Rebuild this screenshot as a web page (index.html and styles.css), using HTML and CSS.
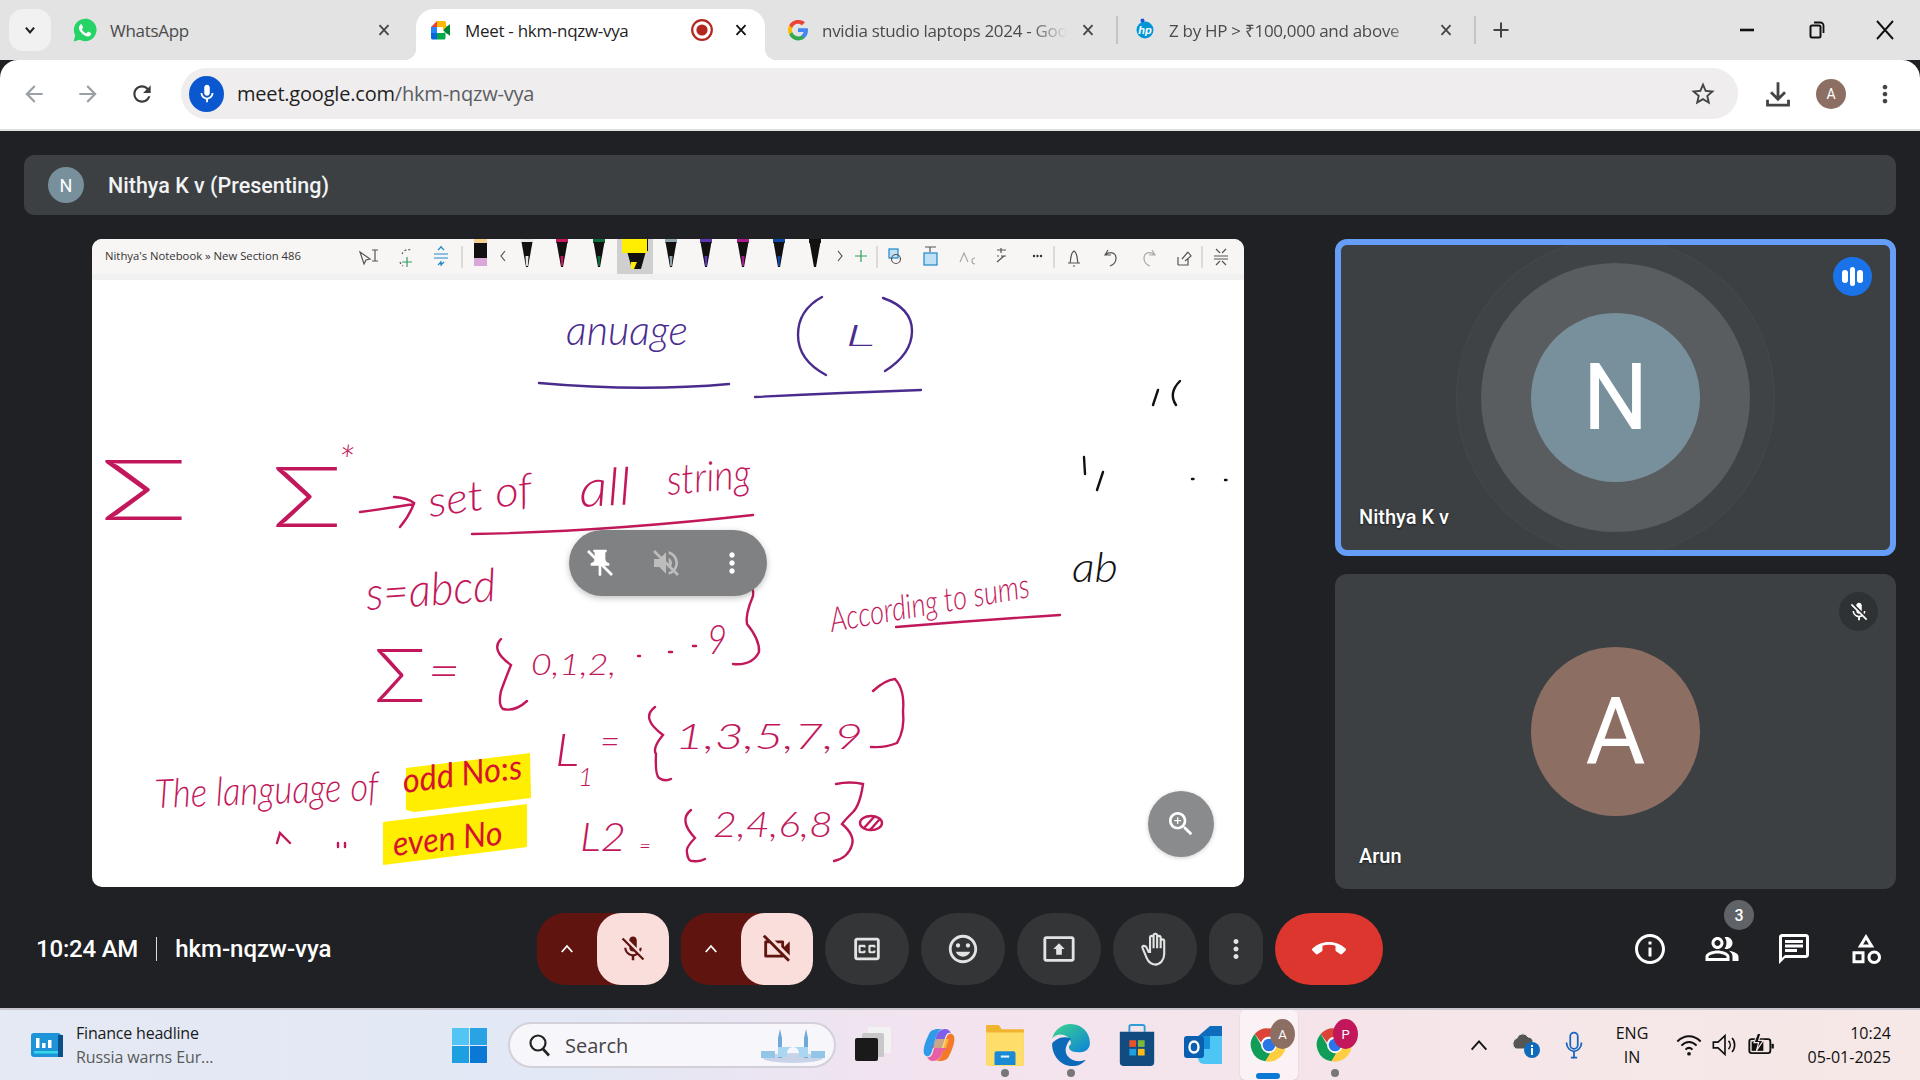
FILE: index.html
```html
<!DOCTYPE html>
<html lang="en">
<head>
<meta charset="utf-8">
<title>Meet - hkm-nqzw-vya</title>
<link rel="stylesheet" href="styles.css">
</head>
<body>
<svg class="defs" width="0" height="0" aria-hidden="true">
  <defs>
    <symbol id="i-mic" viewBox="0 0 24 24"><path d="M12 14c1.66 0 3-1.34 3-3V5c0-1.66-1.34-3-3-3S9 3.34 9 5v6c0 1.66 1.34 3 3 3zm5-3c0 2.76-2.24 5-5 5s-5-2.24-5-5H5c0 3.53 2.61 6.43 6 6.92V21h2v-3.08c3.39-.49 6-3.39 6-6.92h-2z"/></symbol>
    <symbol id="i-micoff" viewBox="0 0 24 24"><path d="M19 11h-1.7c0 .74-.16 1.43-.43 2.05l1.23 1.23c.56-.98.9-2.09.9-3.28zm-4.02.17c0-.06.02-.11.02-.17V5c0-1.66-1.34-3-3-3s-3 1.34-3 3v.18l5.98 5.99zM4.27 3L3 4.27l6.01 6.01V11c0 1.66 1.33 3 2.99 3 .22 0 .44-.03.65-.08l1.66 1.66c-.71.33-1.5.52-2.31.52-2.76 0-5.3-2.1-5.3-5.1H5c0 3.41 2.72 6.23 6 6.72V21h2v-3.28c.91-.13 1.77-.45 2.54-.9L19.73 21 21 19.73 4.27 3z"/></symbol>
    <symbol id="i-close" viewBox="0 0 24 24"><path d="M6 5.5l12 13M18 5.5l-12 13" fill="none" stroke="currentColor" stroke-width="2.4"/></symbol>
    <symbol id="i-chrome" viewBox="0 0 48 48">
      <path fill="#db4437" d="M24 3a21 21 0 0 1 18.2 10.5H24a10.5 10.5 0 0 0-10 7.3L6 10A21 21 0 0 1 24 3z"/>
      <path fill="#0f9d58" d="M6 10l9 15.6a10.5 10.5 0 0 0 11.9 8.9L19.5 44.5A21 21 0 0 1 6 10z"/>
      <path fill="#ffcd40" d="M42.2 13.5A21 21 0 0 1 19.5 44.5l9-15.5a10.5 10.5 0 0 0-4.5-15.5z"/>
      <circle cx="24" cy="24" r="10" fill="#fff"/><circle cx="24" cy="24" r="8" fill="#2a75e8"/>
    </symbol>
    <g id="pen">
      <rect x="-6" y="0" width="12" height="4"/>
      <path d="M-5.5 3h11l-2.5 14 -2 11h-2l-2-11z" fill="#111"/>
      <path d="M-1.5 17h3l-.7 10h-1.6z"/>
    </g>
  </defs>
</svg>

<header class="tabstrip">
  <div class="tab-search"><svg class="ic14" viewBox="0 0 24 24"><path d="M5 8l7 8 7-8" fill="none" stroke="#1f1f1f" stroke-width="3.6"/></svg></div>
  <div class="tab tab-wa">
    <svg class="fav" viewBox="0 0 24 24"><path fill="#25d366" d="M12 1.5A10.4 10.4 0 0 0 3 17l-1.5 5.5 5.7-1.5A10.4 10.4 0 1 0 12 1.5z"/><path fill="#fff" d="M8.6 6.7c-.3 0-.8.1-1.1.6-.5.6-1.1 1.500-1.100 2.900 0 2.900 3.900 7.100 8 7.700 1.800.1 3-.9 3.200-2 .1-.5.1-1-.1-1.100l-2.300-1.200c-.3-.1-.6 0-.7.2l-.9 1.100c-.2.2-.4.2-.7.1-1.600-.7-2.900-1.900-3.700-3.400-.1-.3 0-.5.2-.7l.6-.8c.2-.2.200-.4.100-.7l-1-2.300c-.2-.4-.4-.4-.5-.4z"/></svg>
    <span class="tab-title">WhatsApp</span>
    <svg class="tab-x" viewBox="0 0 24 24"><use href="#i-close"/></svg>
  </div>
  <div class="tab tab-active">
    <svg class="fav" viewBox="0 0 24 24"><path fill="#00832d" d="M14 12l3 3 4 2.800V6.200l-4 2.800z"/><path fill="#0066da" d="M2 15v5c0 .8.700 1.500 1.500 1.500H8V15z"/><path fill="#e94235" d="M8 3L2 9h6z"/><path fill="#2684fc" d="M2 9h6v6H2z"/><path fill="#00ac47" d="M14 15H8v6.500h7c.8 0 1.500-.7 1.500-1.500v-5.800z"/><path fill="#ffba00" d="M15 3H8v6h6v3l3-2.800V4.500C17 3.700 15.800 3 15 3z"/></svg>
    <span class="tab-title tab-title-active">Meet - hkm-nqzw-vya</span>
    <svg class="rec" viewBox="0 0 24 24"><circle cx="12" cy="12" r="9.800" fill="none" stroke="#b3261e" stroke-width="2.200"/><circle cx="12" cy="12" r="5.600" fill="#b3261e"/></svg>
    <svg class="tab-x tab-x-dark" viewBox="0 0 24 24"><use href="#i-close"/></svg>
  </div>
  <div class="tab tab-g">
    <svg class="fav" viewBox="0 0 24 24"><path fill="#4285f4" d="M22 12.200c0-.7-.1-1.400-.2-2H12v3.900h5.600a4.800 4.800 0 0 1-2.100 3.100v2.600h3.400c2-1.800 3.100-4.500 3.100-7.600z"/><path fill="#34a853" d="M12 22.500c2.800 0 5.200-.9 6.900-2.500l-3.400-2.600c-.9.600-2.100 1-3.500 1-2.700 0-5-1.800-5.800-4.300H3.200v2.700a10.500 10.500 0 0 0 8.800 5.700z"/><path fill="#fbbc05" d="M6.200 14.100a6.300 6.300 0 0 1 0-4.200V7.200H3.200a10.500 10.500 0 0 0 0 9.600z"/><path fill="#ea4335" d="M12 5.700c1.500 0 2.900.5 4 1.600l3-3A10.500 10.500 0 0 0 3.200 7.200l3 2.700C7 7.500 9.300 5.700 12 5.700z"/></svg>
    <span class="tab-title tab-fade">nvidia studio laptops 2024 - Google</span>
    <svg class="tab-x" viewBox="0 0 24 24"><use href="#i-close"/></svg>
  </div>
  <i class="tab-sep"></i>
  <div class="tab tab-hp">
    <svg class="fav" viewBox="0 0 24 24"><circle cx="12" cy="12" r="8.500" fill="#0096d6"/><circle cx="9.500" cy="2.500" r="2" fill="#1a56db"/><text x="12" y="15.500" class="hp-text">hp</text></svg>
    <span class="tab-title tab-fade-hp">Z by HP &gt; ₹100,000 and above</span>
    <svg class="tab-x" viewBox="0 0 24 24"><use href="#i-close"/></svg>
  </div>
  <i class="tab-sep tab-sep2"></i>
  <svg class="newtab" viewBox="0 0 24 24"><path d="M12 3v18M3 12h18" stroke="#444" stroke-width="2.400"/></svg>
  <div class="winctl">
    <svg class="wc" viewBox="0 0 24 24"><path d="M5 12h14" stroke="#111" stroke-width="2.600"/></svg>
    <svg class="wc" viewBox="0 0 24 24"><rect x="6.500" y="7.500" width="10" height="12" rx="1.500" fill="none" stroke="#111" stroke-width="2"/><path d="M10 4.500h6.500c1.500 0 3 1.500 3 3V15" fill="none" stroke="#111" stroke-width="1.800"/></svg>
    <svg class="wc" viewBox="0 0 24 24"><path d="M4 3l16 18M20 3L4 21" stroke="#111" stroke-width="1.900"/></svg>
  </div>
</header>

<nav class="toolbar">
  <svg class="nav-ic nav-back" viewBox="0 0 24 24"><path d="M20 11H7.830l5.590-5.590L12 4l-8 8 8 8 1.410-1.410L7.830 13H20v-2z"/></svg>
  <svg class="nav-ic nav-fwd" viewBox="0 0 24 24"><path d="M4 11h12.170l-5.590-5.590L12 4l8 8-8 8-1.410-1.410L16.170 13H4v-2z"/></svg>
  <svg class="nav-ic nav-reload" viewBox="0 0 24 24"><path d="M17.650 6.350C16.200 4.900 14.210 4 12 4c-4.420 0-7.990 3.580-7.990 8s3.570 8 7.990 8c3.730 0 6.840-2.550 7.730-6h-2.080c-.82 2.330-3.040 4-5.650 4-3.310 0-6-2.690-6-6s2.690-6 6-6c1.660 0 3.140.69 4.220 1.780L13 11h7V4l-2.350 2.350z"/></svg>
  <div class="omnibox">
    <span class="omni-mic"><svg class="ic22 white" viewBox="0 0 24 24"><use href="#i-mic"/></svg></span>
    <span class="url"><b>meet.google.com</b>/hkm-nqzw-vya</span>
    <svg class="star" viewBox="0 0 24 24"><path d="M22 9.240l-7.190-.62L12 2 9.190 8.630 2 9.240l5.460 4.730L5.820 21 12 17.270 18.180 21l-1.630-7.030L22 9.240zM12 15.400l-3.760 2.270 1-4.280-3.320-2.880 4.380-.38L12 6.100l1.710 4.040 4.380.38-3.320 2.880 1 4.280L12 15.400z"/></svg>
  </div>
  <svg class="download" viewBox="0 0 24 24"><path d="M12 2v14M6 10.500l6 6 6-6" fill="none" stroke="#444" stroke-width="2.400"/><path d="M3 17v4.500h18V17" fill="none" stroke="#444" stroke-width="2.400"/></svg>
  <span class="profile">A</span>
  <svg class="kebab" viewBox="0 0 24 24"><path d="M12 8c1.100 0 2-.9 2-2s-.9-2-2-2-2 .9-2 2 .9 2 2 2zm0 2c-1.100 0-2 .9-2 2s.9 2 2 2 2-.9 2-2-.9-2-2-2zm0 6c-1.100 0-2 .9-2 2s.9 2 2 2 2-.9 2-2-.9-2-2-2z"/></svg>
</nav>

<main class="meet">
  <section class="presenter-bar">
    <span class="presenter-avatar">N</span>
    <span class="presenter-name">Nithya K v (Presenting)</span>
  </section>

  <div class="stage-row">
    <div class="stage">
      <div class="slide">
        <svg class="board" viewBox="92 239 1152 648">
          <!-- OneNote ribbon -->
          <rect x="92" y="239" width="1152" height="35" class="rib"/>
          <rect x="92" y="274" width="1152" height="6" class="rib-shadow"/>
          <text x="105" y="260" class="rib-text" textLength="196" lengthAdjust="spacingAndGlyphs">Nithya's Notebook » New Section 486</text>
          <g class="rib-ic">
            <path d="M360 252l4 12 2-4 4-1z M372 250h6M375 250v11M372 261h6"/>
            <path d="M402 254a7 7 0 0 1 9-4M400 262a7 7 0 0 0 3 4" stroke-dasharray="2 2"/>
            <path d="M441 248v-2M441 247l-3 3M441 247l3 3M434 254h14M434 258h14M441 262l-3 3M441 265l3-3M441 261v5" class="rib-blue"/>
            <path d="M402 262h10M407 257v10" class="rib-green"/>
            <path d="M462 246v22M877 246v22M1054 246v22M1202 246v22" class="rib-sep"/>
            <path d="M505 251l-4 5 4 5M838 251l4 5-4 5"/>
            <path d="M855 256h12M861 250v12" class="rib-green"/>
            <rect x="889" y="249" width="9" height="9" class="rib-blue-s"/><circle cx="896" cy="259" r="4.500"/>
            <path d="M925 247h11M930 247v5"/><rect x="924" y="253" width="13" height="12" class="rib-blue-s"/>
            <path d="M960 262l4-9 4 9M975 264a3 3 0 1 1 0-6" class="rib-faint"/>
            <path d="M997 250h9M1001 248v5M997 262l7-6M1001 256h5M997 256h2"/>
            <path d="M1070 263c1-2 0-10 4-12 4 2 3 10 4 12zM1068 263h12M1073 266h2"/>
            <path d="M1108 250l-3 5 6 0M1105 255c7-5 11-1 11 3s-3 7-6 8"/>
            <path d="M1152 250l3 5-6 0M1155 255c-7-5-11-1-11 3s3 7 6 8" class="rib-faint"/>
            <path d="M1178 265h10v-6M1178 265v-8M1182 259l6-7M1188 252l3 4-6 5"/>
            <path d="M1216 249l4 4M1226 249l-4 4M1216 265l4-4M1226 265l-4-4M1214 256h14M1214 259h14"/>
          </g>
          <circle cx="1034" cy="256" r="1.200" class="rib-dot"/><circle cx="1037.500" cy="256" r="1.200" class="rib-dot"/><circle cx="1041" cy="256" r="1.200" class="rib-dot"/>
          <rect x="617" y="239" width="36" height="35" class="pen-bg"/>
          <rect x="474" y="239" width="13" height="4" class="pen-peach"/>
          <rect x="474" y="243" width="13" height="15" fill="#111"/>
          <rect x="474" y="258" width="13" height="8" class="pen-lilac"/>
          <use href="#pen" transform="translate(527 239)" class="pen-white"/>
          <use href="#pen" transform="translate(562 239)" class="pen-red"/>
          <use href="#pen" transform="translate(599 239)" class="pen-green"/>
          <path d="M624 239h24v12h-2l-5 18h-9l-5-18h-3z" fill="#111"/>
          <rect x="622" y="239" width="25" height="14" class="pen-yellow"/>
          <path d="M631 262h6l-3 7h-3z" class="pen-yellow"/>
          <use href="#pen" transform="translate(671 239)" class="pen-grey"/>
          <use href="#pen" transform="translate(706 239)" class="pen-purple"/>
          <use href="#pen" transform="translate(743 239)" class="pen-mag"/>
          <use href="#pen" transform="translate(779 239)" class="pen-navy"/>
          <use href="#pen" transform="translate(815 239)" class="pen-black"/>

          <!-- ink: purple -->
          <g class="stroke-p">
            <path d="M539 383Q640 392 729 384"/>
            <path d="M755 397Q840 393 921 390"/>
            <path d="M822 297Q798 310 798 335T826 375"/>
            <path d="M883 298Q912 308 912 331T885 371"/>
          </g>
          <text x="566" y="345" class="ink ink-p" textLength="122" lengthAdjust="spacingAndGlyphs">anuage</text>
          <text x="845" y="346" class="ink ink-p ink-30" textLength="30" lengthAdjust="spacingAndGlyphs">L</text>

          <!-- ink: black -->
          <g class="stroke-k">
            <path d="M1153 405L1158 390M1180 381Q1168 393 1176 405"/>
            <path d="M1084 457L1085 474M1103 472L1097 490"/>
            <path d="M1192 479h1.500M1225 480h1.500"/>
          </g>
          <text x="1072" y="582" class="ink ink-k ink-42" textLength="46" lengthAdjust="spacingAndGlyphs">ab</text>

          <!-- ink: pink -->
          <text x="100" y="520" class="ink ink-r ink-sig" textLength="88" lengthAdjust="spacingAndGlyphs">Σ</text>
          <text x="272" y="527" class="ink ink-r ink-sig" textLength="70" lengthAdjust="spacingAndGlyphs">Σ</text>
          <text x="338" y="476" class="ink ink-r ink-42">*</text>
          <text x="430" y="517" class="ink ink-r ink-42" textLength="105" lengthAdjust="spacingAndGlyphs" transform="rotate(-8 430 517)">set of</text>
          <text x="580" y="507" class="ink ink-r ink-52" textLength="52" lengthAdjust="spacingAndGlyphs" transform="rotate(-3 580 507)">all</text>
          <text x="668" y="495" class="ink ink-r ink-42" textLength="84" lengthAdjust="spacingAndGlyphs" transform="rotate(-5 668 495)">string</text>
          <text x="367" y="610" class="ink ink-r ink-46" textLength="130" lengthAdjust="spacingAndGlyphs" transform="rotate(-4 367 610)">s=abcd</text>
          <text x="374" y="702" class="ink ink-r ink-sig2" textLength="52" lengthAdjust="spacingAndGlyphs">Σ</text>
          <text x="428" y="688" class="ink ink-r ink-52" textLength="32" lengthAdjust="spacingAndGlyphs">=</text>
          <text x="531" y="675" class="ink ink-r ink-30" textLength="85" lengthAdjust="spacingAndGlyphs">0,1,2,</text>
          <text x="707" y="654" class="ink ink-r ink-42" textLength="20" lengthAdjust="spacingAndGlyphs">9</text>
          <text x="832" y="632" class="ink ink-r ink-34" textLength="202" lengthAdjust="spacingAndGlyphs" transform="rotate(-10 832 632)">According to sums</text>
          <text x="555" y="766" class="ink ink-r ink-46" textLength="24" lengthAdjust="spacingAndGlyphs">L</text>
          <text x="578" y="786" class="ink ink-r ink-26">1</text>
          <text x="600" y="754" class="ink ink-r ink-36" textLength="20" lengthAdjust="spacingAndGlyphs">=</text>
          <text x="675" y="749" class="ink ink-r ink-36" textLength="188" lengthAdjust="spacingAndGlyphs">1,3,5,7,9</text>
          <text x="580" y="851" class="ink ink-r ink-40" textLength="46" lengthAdjust="spacingAndGlyphs">L2</text>
          <text x="639" y="853" class="ink ink-r ink-22" textLength="12" lengthAdjust="spacingAndGlyphs">=</text>
          <text x="713" y="837" class="ink ink-r ink-36" textLength="120" lengthAdjust="spacingAndGlyphs">2,4,6,8</text>
          <text x="155" y="808" class="ink ink-r ink-40" textLength="224" lengthAdjust="spacingAndGlyphs" transform="rotate(-2 155 808)">The language of</text>
          <g class="stroke-r">
            <path d="M360 512Q390 508 414 504M394 497Q408 498 414 503Q410 515 400 527"/>
            <path d="M472 534Q600 532 753 515"/>
            <path d="M501 639Q490 650 511 665Q505 680 501 691Q498 705 503 709Q515 712 527 701"/>
            <path d="M638 656h2M669 652h3M693 646h3"/>
            <path d="M739 592Q755 582 753 596Q745 615 747 624Q760 640 759 652Q752 666 733 664"/>
            <path d="M896 627Q980 620 1060 615"/>
            <path d="M655 707Q640 718 663 735Q652 748 656 754Q655 775 659 778Q665 782 671 779"/>
            <path d="M873 691Q885 680 895 679Q905 690 903 711Q905 730 897 743Q885 748 871 747"/>
            <path d="M691 810Q678 820 695 838Q685 848 687 853Q688 862 693 861Q700 862 705 859"/>
            <path d="M836 784Q850 781 863 784Q860 805 853 812Q845 820 842 824Q855 835 852 845Q848 858 834 861"/>
            <ellipse cx="871" cy="823" rx="11" ry="7"/>
            <path d="M864 828l10-11M870 830l9-10"/>
            <path d="M277 843L280 833L290 843M338 843v4M345 843v4"/>
          </g>
          <path d="M406 768L530 753L531 798L414 812L406 810Z" class="hl"/>
          <path d="M383 822L527 804L527 847L383 865Z" class="hl"/>
          <text x="404" y="793" class="ink ink-h ink-34" textLength="120" lengthAdjust="spacingAndGlyphs" transform="rotate(-7 404 793)">odd No:s</text>
          <text x="394" y="856" class="ink ink-h ink-34" textLength="110" lengthAdjust="spacingAndGlyphs" transform="rotate(-6 394 856)">even No</text>
        </svg>
        <div class="float-pill">
          <svg class="pill-ic" viewBox="0 0 24 24"><path d="M16 9V4h1V2H7v2h1v5c0 1.660-1.340 3-3 3v2h5.970v7l1 1 1-1v-7H19v-2c-1.660 0-3-1.340-3-3z" fill="#fff"/><path d="M3 3l18 18" stroke="#fff" stroke-width="2"/></svg>
          <svg class="pill-ic" viewBox="0 0 24 24"><path d="M3 9v6h4l5 5V4L7 9H3zM16.500 12c0-1.770-1.020-3.290-2.500-4.030v8.050c1.480-.73 2.500-2.250 2.500-4.020zM14 3.230v2.060c2.890.86 5 3.540 5 6.710s-2.110 5.850-5 6.710v2.060c4.010-.91 7-4.490 7-8.770s-2.990-7.860-7-8.770z" fill="#bdbdbd"/><path d="M3 3l18 18" stroke="#bdbdbd" stroke-width="2"/></svg>
          <svg class="pill-ic" viewBox="0 0 24 24"><path fill="#fff" d="M12 8c1.100 0 2-.9 2-2s-.9-2-2-2-2 .9-2 2 .9 2 2 2zm0 2c-1.100 0-2 .9-2 2s.9 2 2 2 2-.9 2-2-.9-2-2-2zm0 6c-1.100 0-2 .9-2 2s.9 2 2 2 2-.9 2-2-.9-2-2-2z"/></svg>
        </div>
        <div class="float-zoom"><svg class="zoom-ic" viewBox="0 0 24 24"><path fill="#fff" d="M15.500 14h-.79l-.28-.27C15.410 12.590 16 11.110 16 9.500 16 5.910 13.090 3 9.500 3S3 5.910 3 9.500 5.910 16 9.500 16c1.610 0 3.090-.59 4.230-1.570l.27.28v.79l5 4.990L20.490 19l-4.990-5zm-6 0C7.010 14 5 11.990 5 9.500S7.010 5 9.500 5 14 7.010 14 9.500 11.990 14 9.500 14zM12 10h-2v2H9v-2H7V9h2V7h1v2h2v1z"/></svg></div>
      </div>
    </div>

    <aside class="tiles">
      <article class="tile tile-active">
        <span class="avatar avatar-n">N</span>
        <span class="chip chip-blue"><i class="eq eq-s"></i><i class="eq eq-l"></i><i class="eq eq-s"></i></span>
        <span class="tile-name">Nithya K v</span>
      </article>
      <article class="tile tile-second">
        <span class="avatar avatar-a">A</span>
        <span class="chip chip-dark"><svg class="ic22 white" viewBox="0 0 24 24"><use href="#i-micoff"/></svg></span>
        <span class="tile-name">Arun</span>
      </article>
    </aside>
  </div>

  <footer class="callbar">
    <div class="call-info">
      <span class="call-time">10:24 AM</span>
      <i class="call-sep"></i>
      <span class="call-code">hkm-nqzw-vya</span>
    </div>
    <div class="controls">
      <div class="split">
        <span class="split-caret"><svg class="caret" viewBox="0 0 24 24"><path d="M5 16l7-8 7 8" fill="none" stroke="#fff" stroke-width="2.400"/></svg></span>
        <span class="split-main"><svg class="ic30 darkred" viewBox="0 0 24 24"><use href="#i-micoff"/></svg></span>
      </div>
      <div class="split">
        <span class="split-caret"><svg class="caret" viewBox="0 0 24 24"><path d="M5 16l7-8 7 8" fill="none" stroke="#fff" stroke-width="2.400"/></svg></span>
        <span class="split-main"><svg class="ic34 darkred" viewBox="0 0 24 24"><path d="M9.560 8l-2-2-4.150-4.140L2 3.270 4.730 6H4c-.55 0-1 .45-1 1v10c0 .55.45 1 1 1h12c.21 0 .39-.08.55-.18L19.730 21l1.410-1.410-8.860-8.860L9.560 8zM5 16V8h1.730l8 8H5zm10-8v2.610l6 6V6.500l-4 4V7c0-.55-.45-1-1-1h-5.610l2 2H15z"/></svg></span>
      </div>
      <button class="ctl ctl-84"><svg class="ic34 light" viewBox="0 0 24 24"><path d="M19 4H5c-1.110 0-2 .9-2 2v12c0 1.100.89 2 2 2h14c1.100 0 2-.9 2-2V6c0-1.100-.9-2-2-2zm0 14H5V6h14v12zM7 15h3c.55 0 1-.45 1-1v-1H9.500v.5h-2v-3h2v.5H11v-1c0-.55-.45-1-1-1H7c-.55 0-1 .45-1 1v4c0 .55.45 1 1 1zm7 0h3c.55 0 1-.45 1-1v-1h-1.500v.5h-2v-3h2v.5H18v-1c0-.55-.45-1-1-1h-3c-.55 0-1 .45-1 1v4c0 .55.45 1 1 1z"/></svg></button>
      <button class="ctl ctl-84"><svg class="ic34 light" viewBox="0 0 24 24"><path d="M11.990 2C6.470 2 2 6.480 2 12s4.470 10 9.990 10C17.520 22 22 17.520 22 12S17.520 2 11.990 2zM12 20c-4.420 0-8-3.580-8-8s3.580-8 8-8 8 3.580 8 8-3.580 8-8 8zm3.500-9c.83 0 1.500-.67 1.500-1.500S16.330 8 15.500 8 14 8.670 14 9.500s.67 1.500 1.500 1.500zm-7 0c.83 0 1.500-.67 1.500-1.500S9.330 8 8.500 8 7 8.670 7 9.500 7.670 11 8.500 11zm3.500 6.500c2.330 0 4.310-1.460 5.110-3.500H6.890c.8 2.040 2.780 3.500 5.110 3.500z"/></svg></button>
      <button class="ctl ctl-84"><svg class="ic34 light" viewBox="0 0 24 24"><path d="M21 3H3c-1.110 0-2 .89-2 2v14c0 1.110.89 2 2 2h18c1.110 0 2-.89 2-2V5c0-1.110-.89-2-2-2zm0 16.020H3V4.980h18v14.040zM10 12H8l4-4 4 4h-2v4h-4v-4z"/></svg></button>
      <button class="ctl ctl-84"><svg class="ic34 hand" viewBox="0 0 24 24"><path d="M13 23c-3.260 0-5.700-1.800-6.900-4.800l-3-7.100c-.3-.8.4-1.500 1.200-1.300l.6.200c.6.1 1 .5 1.200 1L7.500 14H8.500V4c0-.8.6-1.300 1.200-1.300s1.300.5 1.300 1.300v7.500V2.500c0-.8.600-1.300 1.200-1.300s1.300.5 1.300 1.300v9V4c0-.8.600-1.300 1.200-1.300s1.300.5 1.300 1.300v7.500V6.500c0-.8.6-1.300 1.200-1.300s1.300.5 1.300 1.300V15.500c0 4.200-2.800 7.500-6.500 7.500z"/></svg></button>
      <button class="ctl ctl-54"><svg class="ic30 light" viewBox="0 0 24 24"><path d="M12 8c1.100 0 2-.9 2-2s-.9-2-2-2-2 .9-2 2 .9 2 2 2zm0 2c-1.100 0-2 .9-2 2s.9 2 2 2 2-.9 2-2-.9-2-2-2zm0 6c-1.100 0-2 .9-2 2s.9 2 2 2 2-.9 2-2-.9-2-2-2z"/></svg></button>
      <button class="ctl ctl-end"><svg class="ic34 white" viewBox="0 0 24 24"><path d="M12 9c-1.600 0-3.150.25-4.600.72v3.100c0 .39-.23.74-.56.9-.98.49-1.870 1.120-2.660 1.850-.18.18-.43.28-.7.28-.28 0-.53-.11-.71-.29L.29 13.080c-.18-.17-.29-.42-.29-.7 0-.28.11-.53.29-.71C3.340 8.780 7.460 7 12 7s8.660 1.780 11.710 4.670c.18.18.29.43.29.71 0 .28-.11.53-.29.71l-2.480 2.480c-.18.18-.43.29-.71.29-.27 0-.52-.11-.7-.28-.79-.74-1.690-1.360-2.670-1.850-.33-.16-.56-.5-.56-.9v-3.100C15.150 9.250 13.600 9 12 9z"/></svg></button>
    </div>
    <div class="side-actions">
      <span class="side"><svg class="ic36 white" viewBox="0 0 24 24"><path d="M11 7h2v2h-2zm0 4h2v6h-2zm1-9C6.480 2 2 6.480 2 12s4.480 10 10 10 10-4.480 10-10S17.520 2 12 2zm0 18c-4.410 0-8-3.590-8-8s3.590-8 8-8 8 3.590 8 8-3.590 8-8 8z"/></svg></span>
      <span class="side"><svg class="ic36 white" viewBox="0 0 24 24"><path d="M16.670 13.130C18.040 14.060 19 15.320 19 17v3h4v-3c0-2.180-3.570-3.470-6.330-3.870zM15 12c2.210 0 4-1.790 4-4s-1.790-4-4-4c-.47 0-.91.1-1.330.24C14.500 5.270 15 6.580 15 8s-.5 2.730-1.330 3.760c.42.14.86.24 1.330.24zM9 12c2.210 0 4-1.790 4-4s-1.790-4-4-4-4 1.790-4 4 1.790 4 4 4zm0-6c1.100 0 2 .9 2 2s-.9 2-2 2-2-.9-2-2 .9-2 2-2zM9 13c-2.670 0-8 1.340-8 4v3h16v-3c0-2.660-5.330-4-8-4zm6 5H3v-.99C3.200 16.290 6.300 15 9 15s5.800 1.290 6 2v1z"/></svg><b class="badge">3</b></span>
      <span class="side"><svg class="ic36 white" viewBox="0 0 24 24"><path d="M20 2H4c-1.100 0-2 .9-2 2v18l4-4h14c1.100 0 2-.9 2-2V4c0-1.100-.9-2-2-2zm0 14H6l-2 2V4h16v12zM6 12h8v2H6zm0-3h12v2H6zm0-3h12v2H6z"/></svg></span>
      <span class="side"><svg class="ic36 white" viewBox="0 0 24 24"><path d="M12 2l-5.500 9h11L12 2zm0 3.840L13.930 9h-3.870L12 5.840zM17.500 13c-2.490 0-4.500 2.010-4.500 4.500s2.010 4.500 4.500 4.500 4.500-2.010 4.500-4.500-2.010-4.500-4.500-4.500zm0 7c-1.380 0-2.500-1.120-2.500-2.500s1.120-2.500 2.500-2.500 2.500 1.120 2.500 2.500-1.120 2.500-2.500 2.500zM3 21.500h8v-8H3v8zm2-6h4v4H5v-4z"/></svg></span>
    </div>
  </footer>
</main>

<footer class="taskbar">
  <div class="widget">
    <svg class="widget-ic" viewBox="0 0 32 24"><rect x="0" y="0" width="30" height="24" rx="3" fill="#1d93d8"/><rect x="27" y="2" width="5" height="22" fill="#0b4f8a"/><rect x="5" y="5" width="3.500" height="10" fill="#fff"/><rect x="11" y="10" width="3.500" height="5" fill="#fff"/><rect x="17" y="7" width="3.500" height="8" fill="#fff"/><rect x="3" y="18" width="24" height="2.500" fill="#33d9e8"/></svg>
    <div class="widget-text">
      <span class="w-title">Finance headline</span>
      <span class="w-sub">Russia warns Eur...</span>
    </div>
  </div>
  <div class="tb-slot tb-win">
    <svg class="win" viewBox="0 0 35 35"><rect width="17" height="17" fill="#52c5f5"/><rect x="18" width="17" height="17" fill="#2aa3e4"/><rect y="18" width="17" height="17" fill="#1e9fe0"/><rect x="18" y="18" width="17" height="17" fill="#0a78d4"/></svg>
  </div>
  <div class="search">
    <svg class="search-ic" viewBox="0 0 24 24"><circle cx="11" cy="10" r="7.500" fill="none" stroke="#222" stroke-width="2.200"/><path d="M16 16l6 6.500" stroke="#222" stroke-width="2.600"/></svg>
    <span class="search-text">Search</span>
    <svg class="mosque" viewBox="0 0 70 36"><ellipse cx="35" cy="31" rx="30" ry="5" fill="#c9d3e8"/><path d="M22 2l2 9v20h-4V11zM48 2l2 9v20h-4V11z" fill="#6fa9d8"/><path d="M20 30V20h30v10h-9v-4a6 6 0 0 0-12 0v4z" fill="#a9d6f0"/><path d="M3 24h14v7H3zM53 24h14v7H53z" fill="#93c5e6"/></svg>
  </div>
  <div class="tb-slot">
    <svg class="ic36" viewBox="0 0 36 36"><rect x="13" y="0" width="23" height="26" rx="1.500" fill="#f2f2f2"/><rect x="7" y="6" width="22" height="24" rx="1.500" fill="#c8c8c8"/><rect x="0" y="11" width="23" height="23" rx="2" fill="#1a1a1a"/><rect x="0" y="11" width="23" height="0" fill="#1a1a1a"/></svg>
  </div>
  <div class="tb-slot">
    <svg class="ic36" viewBox="0 0 36 36"><path d="M8 7c2-5 8-5 10-5h3c-3 1-5 4-6 8l-4 14c-1 4-3 6-6 5C1 27 2 19 8 7z" fill="#2f9be8"/><path d="M28 29c-2 5-8 5-10 5h-3c3-1 5-4 6-8l4-14c1-4 3-6 6-5 4 2 3 10-3 22z" fill="#f5792a"/><path d="M15 10c1-5 5-8 9-8 3 0 5 2 6 4-3-1-5 1-6 5l-3 10H8c3 0 6-3 7-11z" fill="#7d5fe8"/><path d="M21 26c-1 5-5 8-9 8-3 0-5-2-6-4 3 1 5-1 6-5l1-4h15c-3 0-6 2-7 5z" fill="#e85fa4"/><path d="M12 21h13l3-9h-13z" fill="#ffd54a" opacity=".6"/></svg>
  </div>
  <div class="tb-slot tb-dot">
    <svg class="ic38" viewBox="0 0 36 40"><path d="M0 1h12l3 4h21v34H0z" fill="#f2b32e"/><path d="M0 8h36v31a1 1 0 0 1-1 1H1a1 1 0 0 1-1-1z" fill="#ffdd6b"/><path d="M10 26h16a2 2 0 0 1 2 2v11H8V28a2 2 0 0 1 2-2z" fill="#1a8ad4"/><rect x="14" y="30" width="8" height="2" fill="#e3f3ff"/></svg>
  </div>
  <div class="tb-slot tb-dot">
    <svg class="ic38" viewBox="0 0 36 40"><defs><linearGradient id="eg" x1="0" y1="0" x2="1" y2="1"><stop offset="0" stop-color="#3ed68c"/><stop offset="1" stop-color="#0a82d8"/></linearGradient></defs><path d="M18 0C28 0 36 8 36 18c0 7-6 9-11 9-7 0-9-3-9-5 0-1 1-2 2-3 0-6-6-9-10-9-3 0-6 1-8 4C2 6 9 0 18 0z" fill="url(#eg)"/><path d="M0 19C0 30 8 40 19 40c6 0 10-2 13-6-3 1-6 2-10 1-8-2-11-9-8-15 1-3 3-5 4-6-4-2-10-2-14 1-3 2-4 3-4 4z" fill="#0c6ab8"/></svg>
  </div>
  <div class="tb-slot">
    <svg class="ic38" viewBox="0 0 36 44"><path d="M10 8V3a2 2 0 0 1 2-2h12a2 2 0 0 1 2 2v5" fill="none" stroke="#2e9ed8" stroke-width="2"/><path d="M0 8h36v32a4 4 0 0 1-4 4H4a4 4 0 0 1-4-4z" fill="#124b80"/><rect x="10" y="17" width="7" height="7" fill="#e8532b"/><rect x="19" y="17" width="7" height="7" fill="#7cb83c"/><rect x="10" y="26" width="7" height="7" fill="#1ca0e4"/><rect x="19" y="26" width="7" height="7" fill="#fcbc18"/></svg>
  </div>
  <div class="tb-slot">
    <svg class="ic38" viewBox="0 0 38 38"><path d="M12 12L26 0h12v12L24 26z" fill="#0f6cbd"/><path d="M14 10h24v28H20a6 6 0 0 1-6-6z" fill="#4ec6f5"/><path d="M14 10h12v13H14z" fill="#1491d8"/><rect x="0" y="10" width="20" height="22" rx="3" fill="#0b5fb0"/><ellipse cx="10" cy="21" rx="4.500" ry="5.500" fill="none" stroke="#fff" stroke-width="2.400"/></svg>
  </div>
  <div class="tb-slot tb-chrome">
    <svg class="ic38" viewBox="0 0 48 48"><use href="#i-chrome"/></svg>
    <b class="corner corner-a">A</b>
    <i class="running"></i>
  </div>
  <div class="tb-slot tb-dot">
    <svg class="ic38" viewBox="0 0 48 48"><use href="#i-chrome"/></svg>
    <b class="corner corner-p">P</b>
  </div>
  <div class="tray">
    <span class="tray-s tray-48"><svg class="ic22" viewBox="0 0 24 24"><path d="M4 17l8-9 8 9" fill="none" stroke="#111" stroke-width="2"/></svg></span>
    <span class="tray-s tray-47"><svg class="ic30" viewBox="0 0 30 30"><path d="M4 19a6 6 0 0 1 1-11 6 6 0 0 1 11-1 5 5 0 0 1 5 6v6z" fill="#555" stroke="#eee" stroke-width="1"/><circle cx="20" cy="20" r="8" fill="#0f6cbd"/><rect x="19" y="18" width="2" height="7" fill="#fff"/><rect x="19" y="15" width="2" height="2" fill="#fff"/></svg></span>
    <span class="tray-s tray-48"><svg class="ic30" viewBox="0 0 24 24"><rect x="9" y="2" width="6" height="13" rx="3" fill="none" stroke="#1565c0" stroke-width="1.400"/><path d="M6 10c0 4 3 7 6 7s6-3 6-7M12 17v5M9.500 22h5" fill="none" stroke="#1565c0" stroke-width="1.400"/></svg></span>
    <span class="tray-lang"><span>ENG</span><span>IN</span></span>
    <span class="tray-s tray-36 tray-first"><svg class="ic26" viewBox="0 0 24 24"><path d="M2 9c6-6 14-6 20 0M5.500 12.500c4-4 9-4 13 0M9 16c2-2 4-2 6 0" fill="none" stroke="#111" stroke-width="1.700"/><circle cx="12" cy="19.500" r="1.600" fill="#111"/></svg></span>
    <span class="tray-s tray-36"><svg class="ic26" viewBox="0 0 24 24"><path d="M2 9.500h4l6-5.500v16l-6-5.500H2z" fill="none" stroke="#111" stroke-width="1.400"/><path d="M15 8.500c2 2 2 5 0 7M18 6c3 3 3 9 0 12" fill="none" stroke="#111" stroke-width="1.400"/></svg></span>
    <span class="tray-s tray-36"><svg class="ic26" viewBox="0 0 24 24"><rect x="2" y="7" width="18" height="12" rx="2" fill="none" stroke="#111" stroke-width="1.600"/><rect x="4" y="9" width="10" height="8" fill="#111"/><rect x="21" y="11" width="2" height="4" fill="#111"/><path d="M9 2l-3 8h4l-2 7 6-9h-4l2-6z" fill="#111" stroke="#f5e6ea" stroke-width="1"/></svg></span>
    <span class="clock"><span>10:24</span><span>05-01-2025</span></span>
  </div>
</footer>
</body>
</html>
```

FILE: styles.css
```css
* { box-sizing: border-box; }
html, body { margin: 0; padding: 0; }
body {
  width: 1920px; height: 1080px; overflow: hidden;
  display: flex; flex-direction: column;
  font-family: "Open Sans", "Liberation Sans", sans-serif;
  background: #202124;
}
.defs { position: absolute; }
svg { display: block; flex: none; }
.white { fill: #fff; }
.light { fill: #e3e3e3; }
.darkred { fill: #601410; }
.hand { fill: none; stroke: #e3e3e3; stroke-width: 1.5; }
.ic14 { width: 14px; height: 14px; }
.ic22 { width: 22px; height: 22px; }
.ic26 { width: 28px; height: 28px; }
.ic30 { width: 30px; height: 30px; }
.ic34 { width: 34px; height: 34px; }
.ic36 { width: 36px; height: 36px; }
.ic38 { width: 38px; height: 42px; }

/* tab strip */
.tabstrip { height: 60px; background: #e3e3e3; display: flex; align-items: flex-start; padding: 9px 0 0 9px; flex: none; }
.tab-search { width: 42px; height: 42px; border-radius: 14px; background: #f1f1f1; display: flex; align-items: center; justify-content: center; }
.tab { height: 42px; display: flex; align-items: center; position: relative; color: #4b4b4b; }
.fav { width: 24px; height: 24px; }
.tab-title { font-size: 17px; letter-spacing: -.3px; white-space: nowrap; overflow: hidden; }
.tab-x { width: 18px; height: 18px; color: #444; margin-left: auto; }
.tab-x-dark { color: #111; margin-left: 0; }
.tab-wa { width: 365px; padding-left: 21px; padding-right: 23px; gap: 12px; }
.tab-wa .fav { width: 26px; height: 30px; }
.tab-active { width: 349px; height: 51px; background: #fff; border-radius: 18px 18px 0 0; padding: 0 15px 9px 13px; gap: 12px; color: #1f1f1f; margin-top: 0; }
.tab-active::before, .tab-active::after { content: ""; position: absolute; bottom: 0; width: 12px; height: 12px; }
.tab-active::before { left: -12px; background: radial-gradient(circle at 0 0, #e3e3e3 12px, #fff 12.5px); }
.tab-active::after { right: -12px; background: radial-gradient(circle at 100% 0, #e3e3e3 12px, #fff 12.5px); }
.tab-title-active { flex: 1; }
.rec { width: 24px; height: 24px; margin-right: 6px; }
.tab-g { width: 362px - 0; width: 352px; padding-left: 21px; padding-right: 20px; gap: 12px; }
.tab-fade { width: 252px; -webkit-mask-image: linear-gradient(90deg, #000 85%, transparent); mask-image: linear-gradient(90deg, #000 85%, transparent); }
.tab-sep { width: 2px; height: 28px; margin-top: 7px; background: #c4c4c4; margin-left: -1px; }
.tab-hp { width: 356px; padding-left: 15px; padding-right: 19px; gap: 12px; }
.tab-fade-hp { width: 243px; -webkit-mask-image: linear-gradient(90deg, #000 90%, transparent); mask-image: linear-gradient(90deg, #000 90%, transparent); }
.tab-sep2 { margin-left: 0; }
.hp-text { font: italic 700 11px "Liberation Sans", sans-serif; fill: #fff; text-anchor: middle; }
.newtab { width: 20px; height: 20px; margin: 11px 0 0 15px; }
.winctl { margin-left: auto; display: flex; height: 42px; align-items: center; }
.wc { width: 24px; height: 24px; margin-right: 45px; }
.wc:last-child { margin-right: 23px; }

/* toolbar */
.toolbar { height: 71px; flex: none; background: #fff; border-bottom: 2px solid #dfe1e1; border-radius: 18px 18px 0 0; margin-top: 0; display: flex; align-items: center; padding: 0 21px 2px 21px; position: relative; }
.nav-ic { width: 26px; height: 26px; }
.nav-back, .nav-fwd { fill: #9aa0a6; }
.nav-reload { fill: #3c3c3c; margin-left: 0; }
.nav-fwd { margin-left: 28px; }
.nav-reload { margin-left: 28px; }
.omnibox { margin-left: 26px; width: 1559px; height: 51px; border-radius: 26px; background: #efedee; display: flex; align-items: center; padding-left: 8px; }
.omni-mic { width: 35px; height: 36px; border-radius: 50%; background: #0b57d0; display: flex; align-items: center; justify-content: center; }
.url { margin-left: 13px; font-size: 20px; letter-spacing: -.2px; color: #5b5e62; white-space: nowrap; }
.url b { font-weight: 400; color: #1f1f1f; }
.star { width: 28px; height: 28px; fill: #444; margin-left: auto; margin-right: 21px; }
.download { width: 28px; height: 28px; margin-left: 26px; }
.profile { width: 30px; height: 30px; margin-left: 24px; border-radius: 50%; background: #8d6e63; color: #fff; font: 14px "Roboto", sans-serif; display: flex; align-items: center; justify-content: center; }
.kebab { width: 28px; height: 28px; fill: #444; margin-left: 25px; }

/* meet */
.meet { flex: 1; background: #202124; display: flex; flex-direction: column; padding: 24px 24px 0; min-height: 0; }
.presenter-bar { height: 60px; flex: none; background: #3c4043; border-radius: 10px; display: flex; align-items: center; padding-left: 24px; gap: 24px; }
.presenter-avatar { width: 36px; height: 36px; border-radius: 50%; background: #78909c; color: #fff; font: 18px "Roboto", sans-serif; display: flex; align-items: center; justify-content: center; }
.presenter-name { font: 500 21.5px "Roboto", sans-serif; color: #f1f3f4; white-space: nowrap; }
.stage-row { display: grid; grid-template-columns: 1287px 561px; column-gap: 24px; margin-top: 24px; height: 650px; flex: none; }
.stage { display: flex; justify-content: center; align-items: flex-start; }
.slide { width: 1152px; height: 648px; background: #fff; border-radius: 10px; overflow: hidden; position: relative; }
.board { width: 1152px; height: 648px; }

.rib { fill: #f7f6f5; }
.rib-shadow { fill: #f1f1f1; }
.rib-text { font: 11px "Open Sans", sans-serif; fill: #333; }
.rib-ic { fill: none; stroke: #555; stroke-width: 1.200; }
.rib-blue { stroke: #1e88c9; }
.rib-blue-s { stroke: #1e88c9; fill: #bfe0f5; }
.rib-green { stroke: #2e9e60; }
.rib-sep { stroke: #c9c9c9; }
.rib-faint { stroke: #aaa; }
.rib-dot { fill: #333; }
.pen-bg { fill: #cfcfcf; }
.pen-peach { fill: #f7cf8e; }
.pen-lilac { fill: #d9a8d8; }
.pen-white { fill: #e8e8e8; }
.pen-red { fill: #c2185b; }
.pen-green { fill: #0b6b3a; }
.pen-yellow { fill: #ffee00; }
.pen-grey { fill: #90a4ae; }
.pen-purple { fill: #5e35b1; }
.pen-mag { fill: #a8188a; }
.pen-navy { fill: #0d47a1; }
.pen-black { fill: #111; }

.ink { font-family: "Lato", "Open Sans", sans-serif; font-style: italic; font-weight: 300; font-size: 36px; }
.ink-p { fill: #4a2c8f; font-size: 42px; }
.ink-k { fill: #111; }
.ink-r { fill: #c2185b; }
.ink-h { fill: #d5122f; font-weight: 400; }
.ink-22 { font-size: 22px; }
.ink-26 { font-size: 26px; }
.ink-30 { font-size: 30px; }
.ink-34 { font-size: 34px; }
.ink-36 { font-size: 36px; }
.ink-40 { font-size: 40px; }
.ink-42 { font-size: 42px; }
.ink-46 { font-size: 46px; }
.ink-52 { font-size: 52px; }
.ink-sig { font-size: 84px; font-style: normal; }
.ink-sig2 { font-size: 74px; font-style: normal; }
.stroke-p, .stroke-k, .stroke-r { fill: none; stroke-width: 2.400; stroke-linecap: round; }
.stroke-p { stroke: #4a2c8f; }
.stroke-k { stroke: #111; }
.stroke-r { stroke: #c2185b; }
.hl { fill: #ffee00; }

.float-pill { position: absolute; left: 477px; top: 291px; width: 198px; height: 66px; border-radius: 33px; background: #808182; box-shadow: 0 2px 6px rgba(0,0,0,.25); display: flex; align-items: center; padding-left: 15px; gap: 34px; }
.pill-ic { width: 32px; height: 32px; }
.float-zoom { position: absolute; left: 1056px; top: 552px; width: 66px; height: 66px; border-radius: 50%; background: #8a8b8c; box-shadow: 0 1px 4px rgba(0,0,0,.2); display: flex; align-items: center; justify-content: center; }
.zoom-ic { width: 32px; height: 32px; }

/* tiles */
.tiles { display: grid; grid-template-rows: 317px 315px; row-gap: 18px; }
.tile { position: relative; background: #3c4043; border-radius: 12px; overflow: hidden; display: flex; align-items: center; justify-content: center; }
.tile-active { border: 6px solid #669df6; }
.avatar { width: 169px; height: 169px; border-radius: 50%; color: #fff; font: 400 92px "Roboto", sans-serif; display: flex; align-items: center; justify-content: center; }
.avatar-n { background: #78909c; box-shadow: 0 0 0 50px #595d60, 0 0 0 74px #3f4346, 0 0 0 75px #45494c; }
.avatar-a { background: #8d6e63; }
.chip { position: absolute; width: 39px; height: 39px; border-radius: 50%; top: 18px; right: 18px; display: flex; align-items: center; justify-content: center; gap: 2px; }
.tile-second .chip { top: 18px; right: 18px; }
.tile-active .chip { top: 12px; right: 18px; right: 18px; }
.chip-blue { background: #1a73e8; }
.chip-dark { background: #2f3234; }
.eq { display: block; width: 5.500px; background: #fff; border-radius: 3px; }
.eq-s { height: 13px; }
.eq-l { height: 19px; }
.tile-name { position: absolute; left: 24px; bottom: 21px; font: 500 20px "Roboto", sans-serif; color: #fff; text-shadow: 0 1px 2px rgba(0,0,0,.6); white-space: nowrap; }
.tile-active .tile-name { left: 18px; bottom: 21px; }

/* call bar */
.callbar { display: grid; grid-template-columns: 513px 846px 1fr; padding-top: 24px; flex: 1; margin-right: -24px; }
.call-info { display: flex; align-items: center; height: 72px; padding-left: 12px; color: #fff; font: 500 24px "Roboto", sans-serif; white-space: nowrap; }
.call-time { letter-spacing: -.2px; }
.call-sep { width: 1px; height: 24px; background: #dadce0; margin: 0 18px; }
.controls { display: flex; gap: 12px; height: 72px; }
.split { width: 132px; height: 72px; border-radius: 28px 30px 30px 28px; background: #601410; display: flex; }
.split-caret { width: 60px; display: flex; align-items: center; justify-content: center; }
.caret { width: 18px; height: 18px; }
.split-main { width: 72px; background: #f9dedc; border-radius: 24px; display: flex; align-items: center; justify-content: center; }
.ctl { height: 72px; border: 0; padding: 0; border-radius: 36px; background: #333537; display: flex; align-items: center; justify-content: center; }
.ctl-84 { width: 84px; }
.ctl-54 { width: 54px; border-radius: 27px; }
.ctl-end { width: 108px; background: #dc362e; border-radius: 36px; }
.side-actions { display: flex; justify-content: flex-end; padding-right: 18px; height: 72px; }
.side { width: 72px; height: 72px; position: relative; display: flex; align-items: center; justify-content: center; }
.badge { position: absolute; left: 38px; top: -13px; width: 30px; height: 30px; border-radius: 50%; background: #5f6368; color: #fff; font: 500 16px "Roboto", sans-serif; display: flex; align-items: center; justify-content: center; }

/* taskbar */
.taskbar { height: 72px; flex: none; border-top: 2px solid #c8c5cc; display: flex; align-items: center; background: linear-gradient(90deg, #e4e9f4 0%, #e2e8f5 30%, #f2e3ef 48%, #f5e5ea 70%, #f6e8e6 100%); }
.widget { width: 436px; display: flex; align-items: center; padding-left: 31px; gap: 13px; }
.widget-ic { width: 32px; height: 24px; }
.widget-text { display: flex; flex-direction: column; gap: 3px; white-space: nowrap; }
.w-title { font-size: 16px; letter-spacing: -.2px; line-height: 21px; color: #1a1a1a; }
.w-sub { font-size: 16px; letter-spacing: -.1px; line-height: 21px; color: #5a5a5a; }
.tb-slot { width: 66px; height: 70px; display: flex; align-items: center; justify-content: center; position: relative; }
.win { width: 35px; height: 35px; }
.tb-win { width: 67px; margin-right: 5px; }
.search { width: 328px; height: 46px; margin-right: 4px; border-radius: 23px; background: #f7f6fb; border: 2px solid #d4d0da; display: flex; align-items: center; padding-left: 17px; position: relative; }
.search-ic { width: 24px; height: 26px; }
.search-text { margin-left: 14px; font-size: 20px; color: #444; }
.mosque { width: 70px; height: 36px; margin-left: auto; margin-right: 6px; }
.tb-dot::after { content: ""; position: absolute; left: 29px; bottom: 3px; width: 8px; height: 8px; border-radius: 50%; background: #777; }
.tb-chrome { background: rgba(255,255,255,.5); border-radius: 6px; width: 58px; margin: 0 4px; box-shadow: 0 1px 2px rgba(0,0,0,.12); }
.corner { position: absolute; width: 25px; height: 30px; border-radius: 50%; color: #fff; font: 400 13px "Roboto", sans-serif; display: flex; align-items: center; justify-content: center; top: 9px; }
.corner-a { left: 30px; background: #8d6e63; }
.corner-p { left: 31px; background: #c2185b; }
.running { position: absolute; left: 16px; bottom: 1px; width: 24px; height: 6px; border-radius: 3px; background: #0a78d4; }
.tray { margin-left: auto; display: flex; align-items: center; padding-right: 29px; }
.tray-s { display: flex; align-items: center; justify-content: center; }
.tray-48 { width: 48px; }
.tray-47 { width: 47px; }
.tray-36 { width: 36px; }
.tray-first { margin-left: 5px; }
.tray-lang { width: 68px; display: flex; flex-direction: column; align-items: center; gap: 3px; font-size: 16px; line-height: 21px; color: #111; }
.clock { width: 112px; display: flex; flex-direction: column; align-items: flex-end; gap: 3px; font-size: 16px; line-height: 21px; color: #111; white-space: nowrap; }
```
